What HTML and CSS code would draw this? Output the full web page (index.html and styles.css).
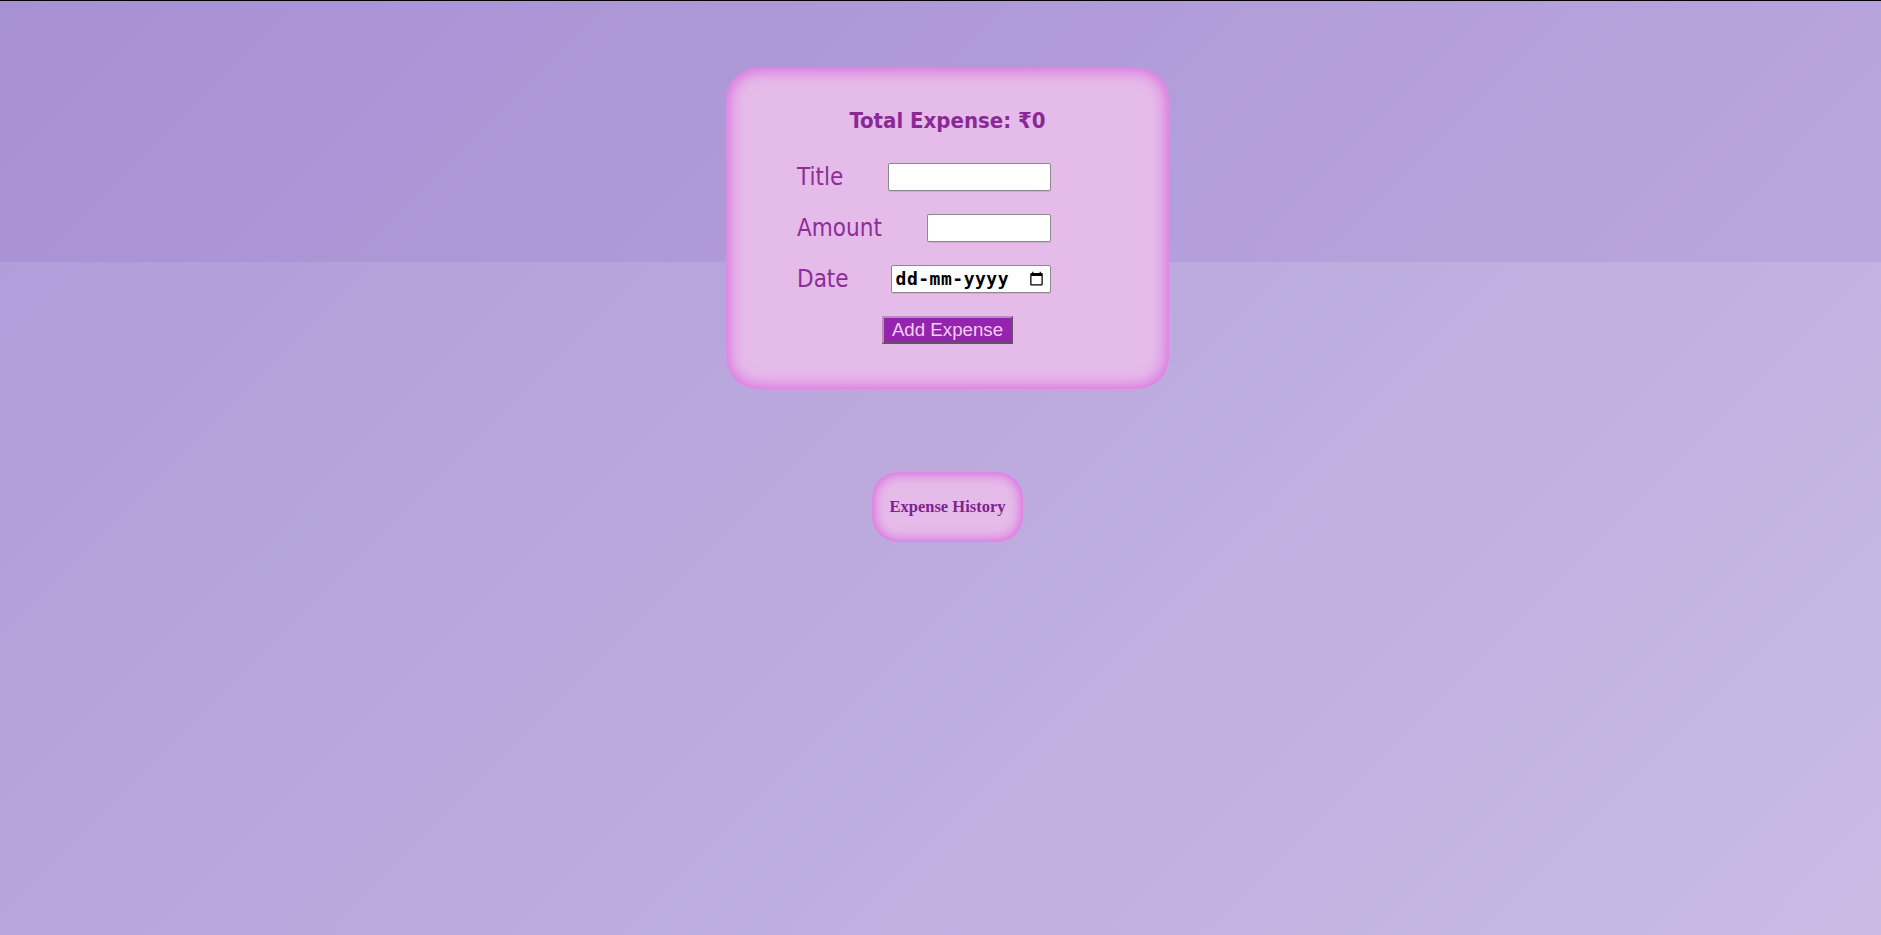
FILE: index.html
```html
<!DOCTYPE html>
<html lang="en">
<head>
<meta charset="utf-8">
<title>Expense Tracker</title>
<link rel="stylesheet" href="styles.css">
</head>
<body>
<main class="page">
  <section class="card">
    <h2 class="total">Total Expense: ₹0</h2>
    <form class="form">
      <div class="row"><label class="label" for="t">Title</label><input class="field" id="t" type="text"></div>
      <div class="row"><label class="label" for="a">Amount</label><input class="field" id="a" type="number"></div>
      <div class="row row-date"><label class="label">Date</label>
        <div class="field date" tabindex="0">
          <span class="date-text">dd-mm-yyyy</span>
          <svg class="cal" viewBox="0 0 24 24" width="15" height="15" aria-hidden="true"><path d="M20 3h-1V1h-2v2H7V1H5v2H4c-1.1 0-2 .9-2 2v16c0 1.1.9 2 2 2h16c1.1 0 2-.9 2-2V5c0-1.1-.9-2-2-2zm0 18H4V8h16v13z" fill="#000"/></svg>
        </div>
      </div>
      <button class="add" type="button">Add Expense</button>
    </form>
  </section>
  <div class="history-wrap">
    <div class="history">Expense History</div>
  </div>
</main>
</body>
</html>
```
FILE: styles.css
```css
html, body { margin: 0; padding: 0; }
body {
  min-height: 100vh;
  box-sizing: border-box;
  border-top: 1px solid #000;
  background:
    linear-gradient(rgba(100,60,180,0.1), rgba(100,60,180,0.1)) no-repeat 0 0 / 100% 262px,
    linear-gradient(135deg, #ae9ad8 0%, #cabae4 100%);
  font-family: "DejaVu Sans Condensed", "DejaVu Sans", sans-serif;
}
.page {
  padding-left: 14px;
  text-align: center;
}
.card {
  box-sizing: border-box;
  width: 443px;
  margin: 67px auto 0;
  padding: 40px 0 45px;
  border-radius: 32px;
  background: #e5bbe9;
  box-shadow: inset 0 0 16px 2px #d864df;
}
.total {
  margin: 0;
  font-size: 22px;
  font-weight: bold;
  color: #8a2996;
  line-height: 25.6px;
}
.form { margin-top: 29px; }
.row {
  display: flex;
  align-items: center;
  gap: 45px;
  width: 254px;
  margin-left: 71px;
  margin-bottom: 23px;
  text-align: left;
}
.row-date { gap: 42px; }
.label {
  font-size: 24px;
  color: #8e2c99;
  line-height: 28px;
}
.field {
  flex: 1;
  min-width: 0;
  box-sizing: border-box;
  height: 28px;
  margin: 0;
  padding: 1px 4px;
  border: 1px solid #8a8a8a;
  border-radius: 2px;
  background: #fff;
  box-shadow: 0 1px 0 rgba(0,0,0,0.08);
}
.date {
  display: flex;
  align-items: center;
  justify-content: space-between;
  padding: 0 6px 0 4px;
  font-family: "DejaVu Sans Mono", monospace;
  font-size: 18px;
  font-weight: bold;
  letter-spacing: 0.5px;
  color: #000;
}
.date-text { line-height: 20px; }
.cal { display: block; }
.add {
  margin-top: 0;
  box-sizing: border-box;
  width: 131px;
  height: 28px;
  padding: 0;
  border: 2px outset #b88fbd;
  background: #9423ad;
  color: #f3cdf3;
  font-family: "Liberation Sans", Arial, sans-serif;
  font-size: 18.7px;
  line-height: 22px;
}
.history-wrap { padding-top: 83px; }
.history {
  display: inline-flex;
  align-items: center;
  justify-content: center;
  box-sizing: border-box;
  width: 151px;
  height: 70px;
  border-radius: 26px;
  background: #e5bbe9;
  box-shadow: inset 0 0 12px 2px #d864df;
  font-family: "Liberation Serif", "Times New Roman", serif;
  font-weight: bold;
  font-size: 16.5px;
  color: #7e2290;
}
```
